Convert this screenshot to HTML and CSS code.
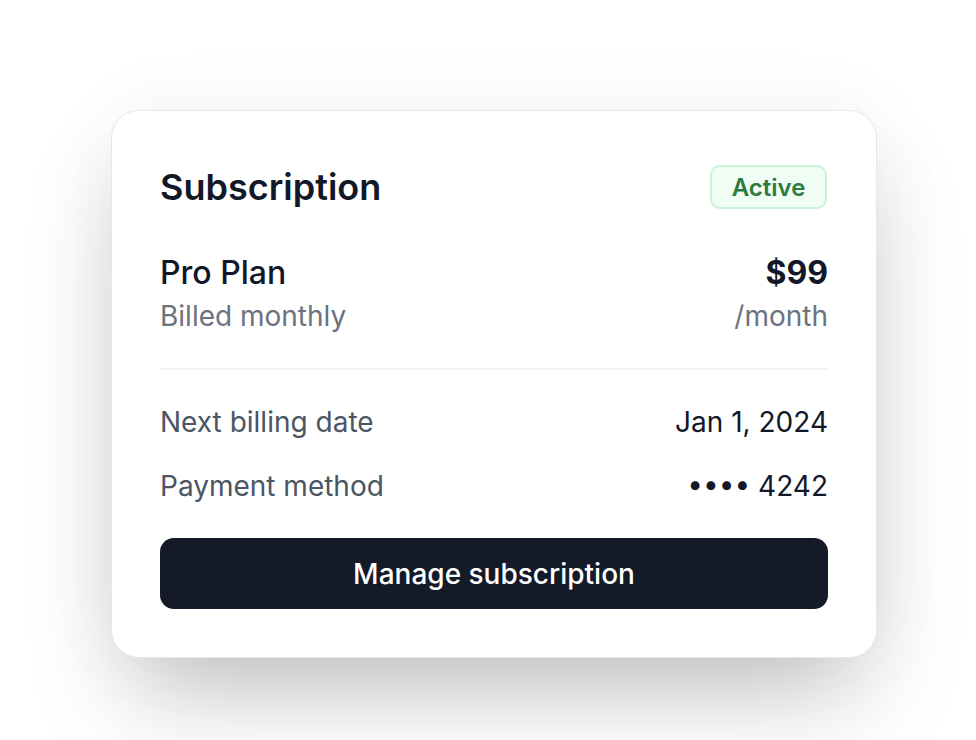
FILE: index.html
```html
<!DOCTYPE html>
<html lang="en">
<head>
<meta charset="utf-8">
<title>Subscription</title>
<link rel="stylesheet" href="styles.css">
</head>
<body>
<main class="page">
  <section class="card">
    <header class="card-header">
      <h1 class="title">Subscription</h1>
      <span class="badge">Active</span>
    </header>
    <div class="plan">
      <div class="plan-info">
        <div class="plan-name">Pro Plan</div>
        <div class="plan-sub">Billed monthly</div>
      </div>
      <div class="plan-price">
        <div class="price">$99</div>
        <div class="plan-sub">/month</div>
      </div>
    </div>
    <dl class="details">
      <div class="row">
        <dt class="label">Next billing date</dt>
        <dd class="value">Jan 1, 2024</dd>
      </div>
      <div class="row">
        <dt class="label">Payment method</dt>
        <dd class="value">•••• 4242</dd>
      </div>
    </dl>
    <button class="btn" type="button">Manage subscription</button>
  </section>
</main>
</body>
</html>
```

FILE: styles.css
```css
* { box-sizing: border-box; }
html, body { margin: 0; padding: 0; background: #ffffff; }
body {
  font-family: Inter, "Noto Sans", sans-serif;
  color: #111827;
  -webkit-font-smoothing: antialiased;
}
.page {
  padding: 110px 0 0 111px;
  min-height: 740px;
}
.card {
  width: 766px;
  background: #ffffff;
  border: 1px solid #e5e7eb;
  border-radius: 28px;
  padding: 48px;
  box-shadow: 0 50px 100px -20px rgba(0, 0, 0, 0.25), 0 0 90px rgba(0, 0, 0, 0.04);
  display: flex;
  flex-direction: column;
}
.card-header {
  display: flex;
  justify-content: space-between;
  align-items: center;
  height: 56px;
}
.title {
  margin: 0;
  font-size: 36px;
  font-weight: 600;
  line-height: 56px;
  color: #111827;
}
.badge {
  display: inline-flex;
  align-items: center;
  justify-content: center;
  height: 44px;
  width: 117px;
  margin-right: 1px;
  background: #f0fdf4;
  border: 2px solid #c9f2d6;
  border-radius: 10px;
  color: #2f7a3e;
  font-size: 24px;
  font-weight: 600;
}
.plan {
  display: flex;
  justify-content: space-between;
  margin-top: 37px;
  padding-bottom: 30px;
  border-bottom: 2px solid #f1f2f4;
}
.plan-price { text-align: right; }
.plan-name {
  font-size: 32px;
  font-weight: 500;
  line-height: 42px;
  color: #111827;
}
.price {
  font-size: 32px;
  font-weight: 700;
  line-height: 42px;
  color: #111827;
}
.plan-sub {
  font-size: 28px;
  line-height: 44px;
  color: #6b7280;
}
.details {
  margin: 32px 0 0;
  display: flex;
  flex-direction: column;
  gap: 24px;
}
.row {
  display: flex;
  justify-content: space-between;
  line-height: 40px;
  font-size: 28px;
}
.label { margin: 0; color: #4b5563; }
.value { margin: 0; color: #111827; }
.btn {
  margin-top: 32px;
  height: 71px;
  width: 100%;
  border: 0;
  border-radius: 14px;
  background: #141a27;
  color: #ffffff;
  font-family: inherit;
  font-size: 28px;
  font-weight: 500;
  cursor: pointer;
}
```
